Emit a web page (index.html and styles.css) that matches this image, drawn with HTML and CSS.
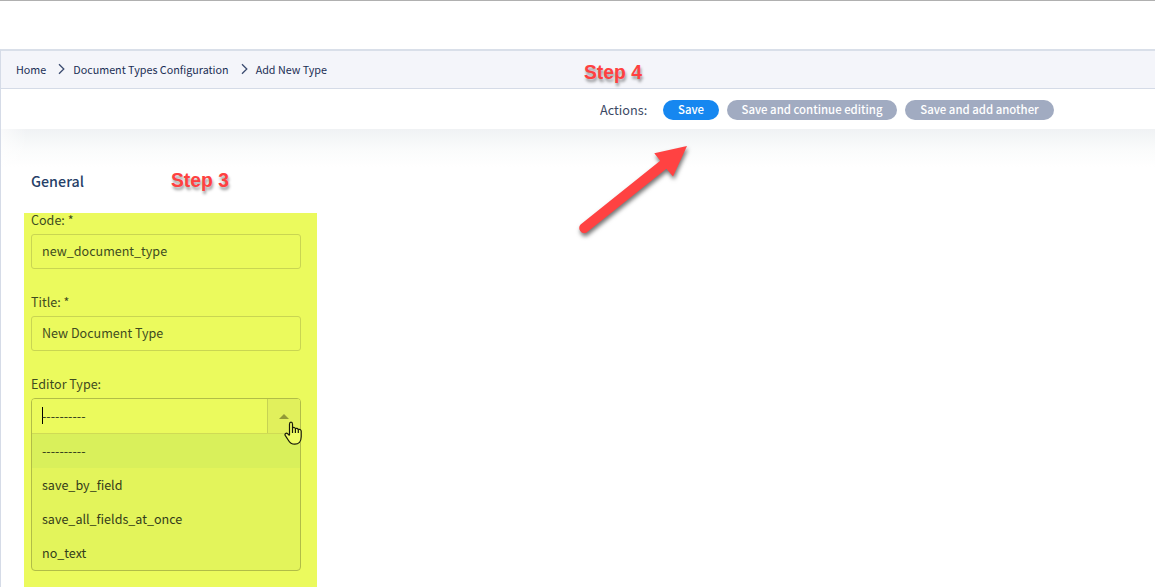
FILE: index.html
```html
<!DOCTYPE html>
<html lang="en">
<head>
<meta charset="utf-8">
<title>Add New Type</title>
<link rel="stylesheet" href="styles.css">
</head>
<body>
<div class="topbar"></div>
<div class="frame">
  <nav class="breadcrumb">
    <a class="crumb">Home</a>
    <svg class="chevron" width="7" height="12" viewBox="0 0 7 12"><path d="M1 1.2 5.8 6 1 10.8"/></svg>
    <a class="crumb crumb-config">Document Types Configuration</a>
    <svg class="chevron" width="7" height="12" viewBox="0 0 7 12"><path d="M1 1.2 5.8 6 1 10.8"/></svg>
    <span class="crumb">Add New Type</span>
  </nav>
  <div class="actions">
    <span class="actions-label">Actions:</span>
    <button class="btn btn-primary">Save</button>
    <button class="btn btn-continue">Save and continue editing</button>
    <button class="btn btn-another">Save and add another</button>
  </div>
  <main class="content">
    <h2 class="heading">General</h2>
    <form class="form">
      <label class="label">Code: *</label>
      <div class="input">new_document_type</div>
      <label class="label">Title: *</label>
      <div class="input">New Document Type</div>
      <label class="label">Editor Type:</label>
      <div class="select">
        <div class="control">
          <div class="value">----------</div>
          <div class="toggle"><svg width="10" height="5" viewBox="0 0 10 5"><path d="M0 5 5 0 10 5z"/></svg></div>
        </div>
        <div class="option option-active">----------</div>
        <div class="option">save_by_field</div>
        <div class="option">save_all_fields_at_once</div>
        <div class="option">no_text</div>
      </div>
    </form>
  </main>
</div>
<div class="note note-3">Step 3</div>
<div class="note note-4">Step 4</div>
<svg class="arrow" width="130" height="110" viewBox="0 0 130 110"><path d="M10.6 84.6 90.2 20.7 84.3 13.3 117 6 103 36.5 96.4 28.8 16.3 92.7A5.1 5.1 0 0 1 10.6 84.6z"/></svg>
<svg class="cursor" width="19" height="25" viewBox="0 0 19 25"><path d="M5.5 14V3.2C5.5.5 8.5.5 8.5 3.2V7.1C9.5 6.1 11 6.3 11.3 7.7 12.3 6.9 13.8 7.3 14.2 8.6 15.4 8 17.2 8.5 17.2 10.3V15.7C17.2 20.5 14.5 23.2 10.8 23.2 7.5 23.2 5.7 21.7 4.2 19L1.2 14.4C.4 13 2.3 11.5 3.6 12.7L5.5 14.6M8.5 7V12M11.4 8V12M14.3 9V12"/></svg>
</body>
</html>
```
FILE: styles.css
```css
* { box-sizing: border-box; }
body {
  margin: 0;
  height: 587px;
  overflow: hidden;
  position: relative;
  background: #fff;
  color: #1d3557;
  font-family: "Noto Sans CJK SC", sans-serif;
  font-size: 12.55px;
  display: flex;
  flex-direction: column;
}
.topbar { height: 49px; flex: none; border-top: 1px solid #b0b0b0; }
.frame {
  flex: 1;
  display: flex;
  flex-direction: column;
  border-left: 1px solid #d5dbe7;
  border-top: 2px solid #d9dfe9;
}
.breadcrumb {
  height: 38px;
  flex: none;
  display: flex;
  align-items: center;
  padding: 0 0 1px 15px;
  background: #f4f5fa;
  border-bottom: 1px solid #d5dbe7;
  color: #1b2f55;
  font-size: 10.75px;
  white-space: nowrap;
}
.chevron { margin: 0 8px 0 12px; fill: none; stroke: #3c4c70; stroke-width: 1.3; }
.actions {
  height: 40px;
  flex: none;
  display: flex;
  align-items: center;
  padding: 1px 0 0 599px;
  gap: 8px;
}
.actions-label { width: 55px; color: #3b4863; font-size: 12.7px; }
.btn {
  height: 20px;
  padding: 0 0 1px;
  border: 0;
  border-radius: 10px;
  background: #a1abc1;
  color: #fff;
  font: 500 11.4px/19px "Noto Sans CJK SC", sans-serif;
  white-space: nowrap;
}
.btn-primary { width: 56px; background: #1687f0; }
.btn-continue { width: 170px; }
.btn-another { width: 149px; }
.content {
  flex: 1;
  padding: 41px 0 0 23px;
  background:
    linear-gradient(90deg, rgba(255, 255, 255, .65), rgba(255, 255, 255, 0) 26px) no-repeat,
    linear-gradient(#f0f2f4, #fafbfb 20px, #fff 38px) no-repeat;
}
.heading { margin: 0 0 0 7px; height: 43px; font-size: 14.3px; font-weight: 500; line-height: 22px; color: #263f68; }
.form {
  width: 293px;
  height: 375px;
  padding: 0 16px 0 7px;
  background: #ebfa5d;
  color: #3e4b20;
}
.label { display: block; height: 21px; line-height: 14px; }
.input {
  height: 35px;
  margin-bottom: 26px;
  padding-left: 10px;
  border: 1px solid #c9d552;
  border-radius: 3px;
  line-height: 32px;
}
.select {
  height: 173px;
  border: 1px solid #b1bd47;
  border-radius: 4px;
  background: #e3f45b;
  color: #333c1a;
  overflow: hidden;
}
.control { height: 35px; display: flex; background: #ebfa5d; border-bottom: 1px solid #cfdb55; }
.value { flex: 1; margin-left: 10px; line-height: 34px; background: linear-gradient(#000, #000) 0 8px / 1px 17px no-repeat; }
.toggle { width: 33px; display: flex; align-items: center; justify-content: center; background: #e1f05c; border-left: 1px solid #c6d253; }
.toggle path { fill: #929a37; }
.option { height: 34px; padding-left: 10px; line-height: 34px; }
.option-active { background: #d9f05b; }
.note {
  position: absolute;
  font: bold 19.3px/22px "Liberation Sans", Arial, sans-serif;
  color: #ff4040;
  text-shadow: 1px 3px 3px rgba(0, 0, 0, .4);
  white-space: nowrap;
}
.note-3 { left: 171px; top: 170px; }
.note-4 { left: 584px; top: 62px; }
.arrow { position: absolute; left: 569.5px; top: 140px; fill: #ff4242; filter: drop-shadow(1px 3px 2px rgba(0, 0, 0, .55)); }
.cursor { position: absolute; left: 284px; top: 421px; fill: #effc66; stroke: #16180a; stroke-width: 1.2; }
```
